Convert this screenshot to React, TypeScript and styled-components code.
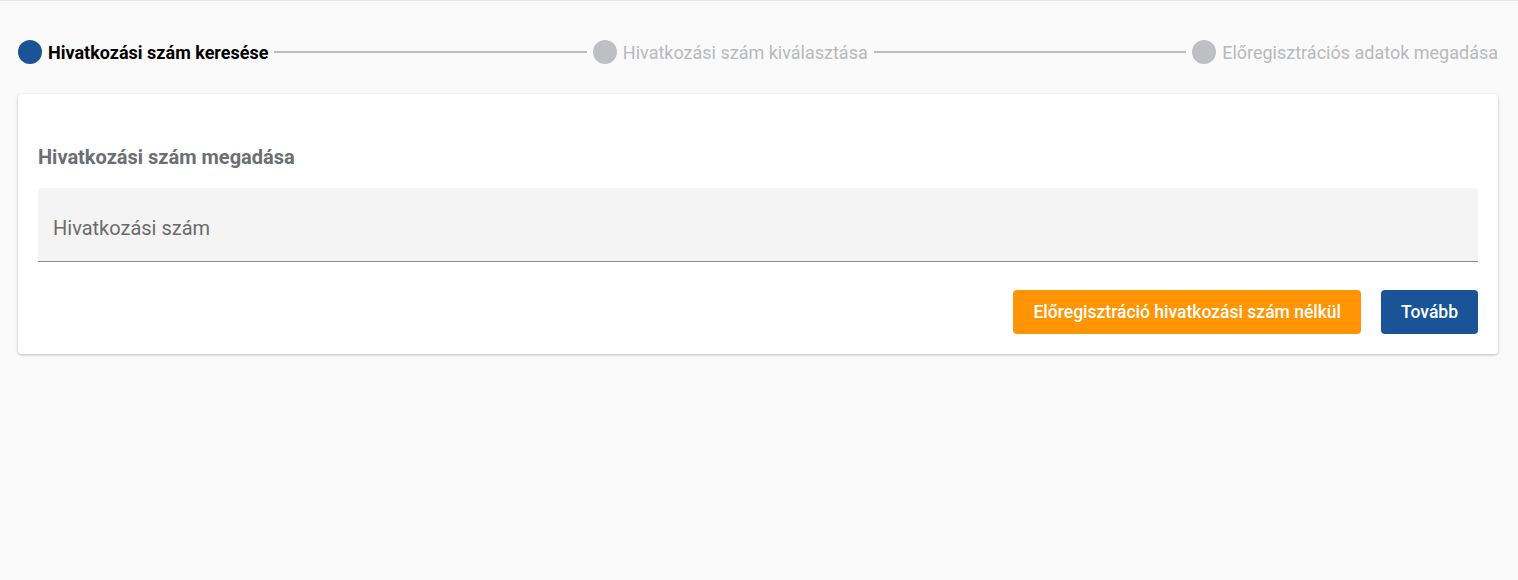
import React from 'react';
import styled, {createGlobalStyle} from "styled-components";

const GlobalStyle = createGlobalStyle`
  html, body {
    margin: 0;
    padding: 0;
    background: #fafafa;
    font-family: Roboto, "Liberation Sans", sans-serif;
  }
  * {
    box-sizing: border-box;
  }
`

type StepType = {
    label: string
    active: boolean
}

const steps: Array<StepType> = [
    {label: 'Hivatkozási szám keresése', active: true},
    {label: 'Hivatkozási szám kiválasztása', active: false},
    {label: 'Előregisztrációs adatok megadása', active: false},
]

export default function App() {
    return (
        <Page>
            <GlobalStyle/>
            <Stepper>
                {
                    steps.map((step, index) => (
                        <React.Fragment key={index}>
                            {index > 0 && <Connector/>}
                            <Step>
                                <Dot active={step.active}/>
                                <StepLabel active={step.active}>{step.label}</StepLabel>
                            </Step>
                        </React.Fragment>
                    ))
                }
            </Stepper>
            <Card>
                <Title>Hivatkozási szám megadása</Title>
                <Field>
                    <Input placeholder="Hivatkozási szám"/>
                </Field>
                <Actions>
                    <Button variant="orange">Előregisztráció hivatkozási szám nélkül</Button>
                    <Button variant="blue">Tovább</Button>
                </Actions>
            </Card>
        </Page>
    );
};

const Page = styled.div`
  min-height: 580px;
  border-top: 1px solid #e6e6e6;
  padding: 39px 20px 0 18px;
`

const Stepper = styled.div`
  display: flex;
  align-items: center;
  height: 24px;
  margin-bottom: 30px;
`

const Step = styled.div`
  display: flex;
  align-items: center;
  gap: 6px;
  flex-shrink: 0;
`

const Dot = styled.span<{ active: boolean }>`
  width: 24px;
  height: 24px;
  border-radius: 50%;
  background: ${props => props.active ? '#1a5496' : '#bdbfc2'};
`

const StepLabel = styled.span<{ active: boolean }>`
  font-size: 18px;
  font-weight: ${props => props.active ? 700 : 400};
  color: ${props => props.active ? '#000' : '#b8b9bb'};
`

const Connector = styled.div`
  flex: 1;
  height: 2px;
  background: #bdbdbd;
  margin: 0 6px;
`

const Card = styled.div`
  background: #fff;
  border-radius: 4px;
  box-shadow: 0 1px 3px rgba(0, 0, 0, 0.25);
  padding: 20px;
`

const Title = styled.h3`
  margin: 31px 0 19px;
  font-size: 20px;
  line-height: 24px;
  font-weight: 700;
  color: #6b6e72;
`

const Field = styled.div`
  background: #f4f4f4;
  border-bottom: 1px solid #8a8a8a;
  border-radius: 4px 4px 0 0;
`

const Input = styled.input`
  display: block;
  width: 100%;
  height: 73px;
  border: none;
  background: transparent;
  padding: 6px 15px 0;
  font-family: Roboto, "Liberation Sans", sans-serif;
  font-size: 20px;
  outline: none;
  color: #333;

  &::placeholder {
    color: #6b6b6b;
  }
`

const Actions = styled.div`
  display: flex;
  justify-content: flex-end;
  gap: 20px;
  margin-top: 28px;
`

const Button = styled.button<{ variant: 'orange' | 'blue' }>`
  height: 44px;
  padding: 0 20px;
  border: none;
  border-radius: 4px;
  font-family: Roboto, "Liberation Sans", sans-serif;
  font-size: 17.5px;
  font-weight: 500;
  color: #fff;
  background: ${props => props.variant === 'orange' ? '#ff9505' : '#1a5496'};
  cursor: pointer;
`
